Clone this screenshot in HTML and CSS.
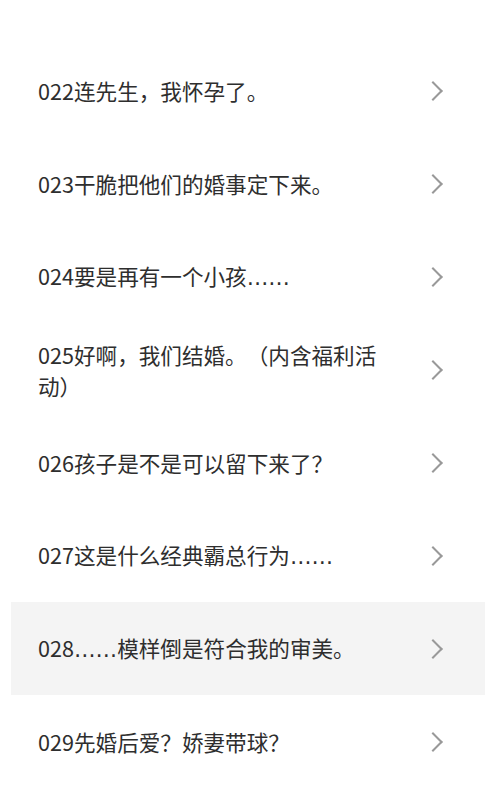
FILE: index.html
```html
<!DOCTYPE html>
<html lang="zh-CN">
<head>
    <meta charset="UTF-8">
    <meta name="viewport" content="width=device-width, initial-scale=1.0">
    <title>目录</title>
    <link rel="stylesheet" href="styles.css">
</head>
<body>
    <ul class="chapter-list">
        <li class="chapter"><span class="title">022连先生，我怀孕了。</span><span class="arrow"></span></li>
        <li class="chapter"><span class="title">023干脆把他们的婚事定下来。</span><span class="arrow"></span></li>
        <li class="chapter"><span class="title">024要是再有一个小孩<span class="dots">……</span></span><span class="arrow"></span></li>
        <li class="chapter"><span class="title">025好啊，我们结婚。（内含福利活动）</span><span class="arrow"></span></li>
        <li class="chapter"><span class="title">026孩子是不是可以留下来了？</span><span class="arrow"></span></li>
        <li class="chapter"><span class="title">027这是什么经典霸总行为<span class="dots">……</span></span><span class="arrow"></span></li>
        <li class="chapter active"><span class="title">028<span class="dots">……</span>模样倒是符合我的审美。</span><span class="arrow"></span></li>
        <li class="chapter"><span class="title">029先婚后爱？娇妻带球？</span><span class="arrow"></span></li>
    </ul>
</body>
</html>
```

FILE: styles.css
```css
body {
    margin: 0;
    background: #fff;
    color: #2e2e2e;
    font-family: "Noto Sans CJK SC", "Noto Sans", sans-serif;
}
.chapter-list {
    list-style: none;
    margin: 0 0 0 11px;
    padding: 44px 0 0;
    width: 474px;
}
.chapter {
    display: flex;
    align-items: center;
    justify-content: space-between;
    height: 93px;
    padding: 0 41px 0 27px;
}
.chapter.active {
    background-color: #f4f4f4;
}
.title {
    max-width: 360px;
    font-size: 21.6px;
    line-height: 31px;
    text-spacing-trim: space-all;
}
.dots {
    font-family: "DejaVu Sans", sans-serif;
}
.arrow {
    flex-shrink: 0;
    width: 12px;
    height: 12px;
    border-top: 2px solid #999;
    border-right: 2px solid #999;
    transform: rotate(45deg);
    margin-right: 4px;
}
```
